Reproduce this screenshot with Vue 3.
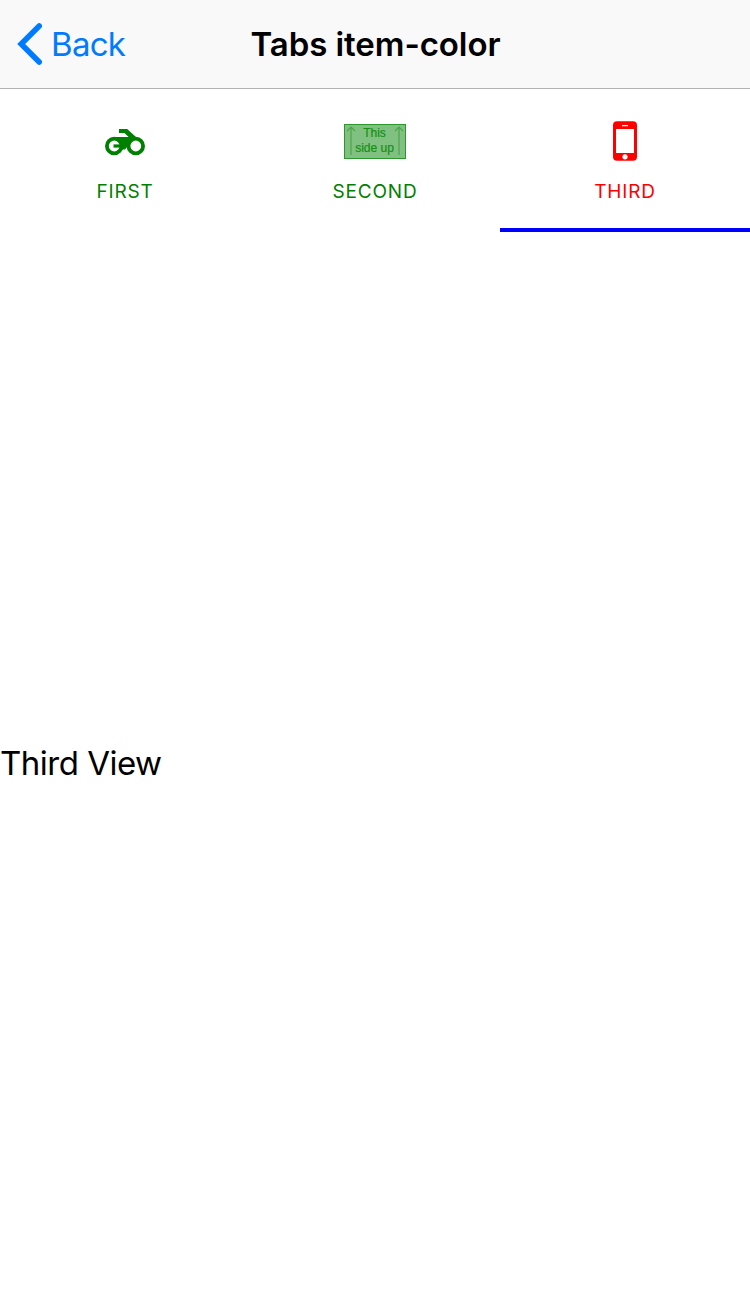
<script setup>
const tabs = [
  { id: 'first', label: 'First' },
  { id: 'second', label: 'Second' },
  { id: 'third', label: 'Third' },
]
const active = 'third'
</script>

<template>
  <div class="screen">
    <header class="bar">
      <a class="back">
        <svg class="chevron" width="26" height="44" viewBox="0 0 26 44">
          <path d="M22.2 4 4.2 22 22.2 40" fill="none" stroke="#007aff" stroke-width="5.6" stroke-linecap="round" stroke-linejoin="miter" />
        </svg>
        <span class="back-label">Back</span>
      </a>
      <h1 class="title">Tabs item-color</h1>
    </header>

    <nav class="tabs">
      <div v-for="tab in tabs" :key="tab.id" class="tab" :class="{ active: tab.id === active }">
        <div class="icon">
          <svg v-if="tab.id === 'first'" width="40" height="40" viewBox="0 0 40 40">
            <path d="M14 8h8.200l9.300 8.500-5 4-6.500 8h-4L9 24v-8h14.600l-4.200-4H14z" fill="currentColor" />
            <circle cx="9.200" cy="25" r="7.300" fill="#fff" stroke="currentColor" stroke-width="3.800" />
            <circle cx="30.800" cy="25" r="7.300" fill="#fff" stroke="currentColor" stroke-width="3.800" />
            <path d="M8.500 25H18" stroke="currentColor" stroke-width="3.200" />
          </svg>
          <svg v-else-if="tab.id === 'second'" width="62" height="36" viewBox="0 0 62 36">
            <rect x=".5" y="1.500" width="61" height="34" fill="#80c080" stroke="#2c972c" />
            <path d="M7 32V4M3 8l4-4 4 4M55 32V4M51 8l4-4 4 4" fill="none" stroke="#4ca64c" stroke-width="1.200" />
            <g class="box-text" text-anchor="middle">
              <text x="30.500" y="14">This</text>
              <text x="30.500" y="28.500">side up</text>
            </g>
          </svg>
          <svg v-else width="24" height="40" viewBox="0 0 24 40">
            <path fill="currentColor" fill-rule="evenodd" d="M4 .3h16a4 4 0 0 1 4 4v31.400a4 4 0 0 1-4 4H4a4 4 0 0 1-4-4V4.300a4 4 0 0 1 4-4zM3 8v24h18V8zM9 4v1.300h6V4zM12 33.200a2.600 2.600 0 1 0 0 5.200 2.600 2.600 0 0 0 0-5.200z" />
          </svg>
        </div>
        <span class="label">{{ tab.label }}</span>
      </div>
    </nav>

    <main class="view">
      <span class="view-text">Third View</span>
    </main>
  </div>
</template>

<style>
body {
  background: #fff;
}
</style>

<style scoped>
.screen {
  display: flex;
  flex-direction: column;
  height: 1294px;
  overflow: hidden;
  font-family: Inter, "Liberation Sans", sans-serif;
  color: #000;
  background: #fff;
}
.bar {
  display: grid;
  grid-template-columns: 1fr auto 1fr;
  align-items: center;
  box-sizing: border-box;
  height: 89px;
  background: #f9f9f9;
  border-bottom: 1px solid #b2b2b2;
}
.back {
  display: flex;
  align-items: center;
  gap: 8px;
  padding-left: 17px;
  color: #007aff;
}
.chevron {
  flex: none;
}
.back-label {
  font-size: 33px;
  line-height: 44px;
  letter-spacing: -0.7px;
}
.title {
  margin: 0;
  padding-left: 1px;
  font-size: 33px;
  font-weight: 600;
  line-height: 44px;
  letter-spacing: -0.07px;
}
.tabs {
  display: flex;
  height: 143px;
}
.tab {
  flex: 1;
  display: flex;
  flex-direction: column;
  align-items: center;
  box-sizing: border-box;
  padding-top: 32px;
  border-bottom: 4px solid transparent;
  color: #008000;
}
.tab.active {
  color: #f00;
  border-bottom-color: #00f;
}
.icon {
  display: flex;
  align-items: center;
  justify-content: center;
  height: 40px;
}
.box-text {
  font: 12px "Liberation Sans", sans-serif;
  fill: #169016;
  stroke: #169016;
  stroke-width: 0.2px;
}
.label {
  margin-top: 19px;
  font-size: 19px;
  line-height: 24px;
  letter-spacing: 0.8px;
  text-transform: uppercase;
}
.view {
  flex: 1;
  display: flex;
  align-items: center;
}
.view-text {
  font-size: 33px;
  line-height: 42px;
  letter-spacing: -0.5px;
}
</style>
